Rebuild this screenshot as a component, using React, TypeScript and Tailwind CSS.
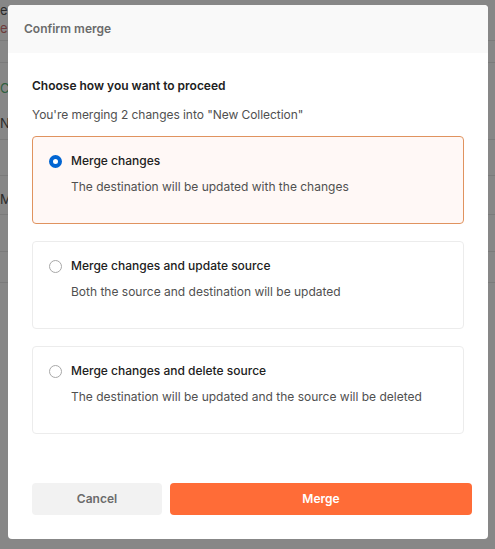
import React from "react";

type Option = { title: string; desc: string; selected?: boolean };

const options: Option[] = [
  { title: "Merge changes", desc: "The destination will be updated with the changes", selected: true },
  { title: "Merge changes and update source", desc: "Both the source and destination will be updated" },
  { title: "Merge changes and delete source", desc: "The destination will be updated and the source will be deleted" },
];

function Radio({ selected }: { selected?: boolean }) {
  return selected ? (
    <span className="block w-[13px] h-[13px] shrink-0 rounded-full border-[4px] border-[#0265d2] bg-white" />
  ) : (
    <span className="block w-[13px] h-[13px] shrink-0 rounded-full border border-[#a8a8a8] bg-white" />
  );
}

export default function App() {
  return (
    <div className="relative w-[495px] h-[549px] overflow-hidden bg-[#878787] font-['Inter',sans-serif]">
      {/* dimmed page behind the dialog */}
      <div className="flex flex-col text-[13px] leading-4 text-[#2b2b2b]">
        <div className="h-[18px] pt-[2px] whitespace-nowrap">e Sl</div>
        <div className="h-[23px] border-b border-[#7b7b7b] whitespace-nowrap text-[#6e3b3b] pt-[2px]">e:</div>
        <div className="h-[22px] border-b border-[#7b7b7b]" />
        <div className="h-[77px] border-b border-[#7b7b7b] pt-[17px]">
          <div className="text-[#2f5f3f]">C</div>
          <div className="mt-[19px]">N</div>
        </div>
        <div className="h-[36px] border-b border-[#7b7b7b]" />
        <div className="h-[39px] border-b border-[#7b7b7b] pt-[15px]">M</div>
        <div className="h-[37px] border-b border-[#7b7b7b]" />
        <div className="h-[31px] border-b border-[#7b7b7b]" />
      </div>

      {/* dialog */}
      <div className="absolute left-[8px] top-[5px] w-[480px] h-[534px] bg-white rounded-[4px] overflow-hidden flex flex-col">
        <div className="h-[48px] shrink-0 bg-[#f9f9f9] flex items-center px-4 text-[12px] font-semibold text-[#6b6b6b]">
          Confirm merge
        </div>
        <div className="px-6 pt-[25px] flex flex-col">
          <div className="text-[12px] leading-4 font-semibold text-[#212121]">Choose how you want to proceed</div>
          <div className="mt-[13px] text-[12px] leading-4 tracking-[-0.05px] text-[#505050]">
            You're merging 2 changes into "New Collection"
          </div>
          <div className="mt-[13px] flex flex-col gap-[17px]">
            {options.map((o) => (
              <div
                key={o.title}
                className={
                  o.selected
                    ? "h-[88px] rounded-[4px] border border-[#e0935f] bg-[#fff8f6] px-4 pt-[16px]"
                    : "h-[88px] rounded-[4px] border border-[#ececec] bg-white px-4 pt-[16px]"
                }
              >
                <div className="flex items-center gap-[9px]">
                  <Radio selected={o.selected} />
                  <div className="text-[12px] leading-4 font-medium text-[#212121]">{o.title}</div>
                </div>
                <div className="mt-[10px] pl-[22px] text-[12px] leading-4 text-[#505050]">{o.desc}</div>
              </div>
            ))}
          </div>
        </div>
        <div className="mt-auto flex gap-2 pl-6 pr-4 pb-[24px]">
          <button className="w-[130px] h-[32px] rounded-[4px] bg-[#f2f2f2] text-[12px] font-semibold text-[#6b6b6b]">
            Cancel
          </button>
          <button className="flex-1 h-[32px] rounded-[4px] bg-[#ff6c37] text-[12px] font-semibold text-white">
            Merge
          </button>
        </div>
      </div>
    </div>
  );
}
